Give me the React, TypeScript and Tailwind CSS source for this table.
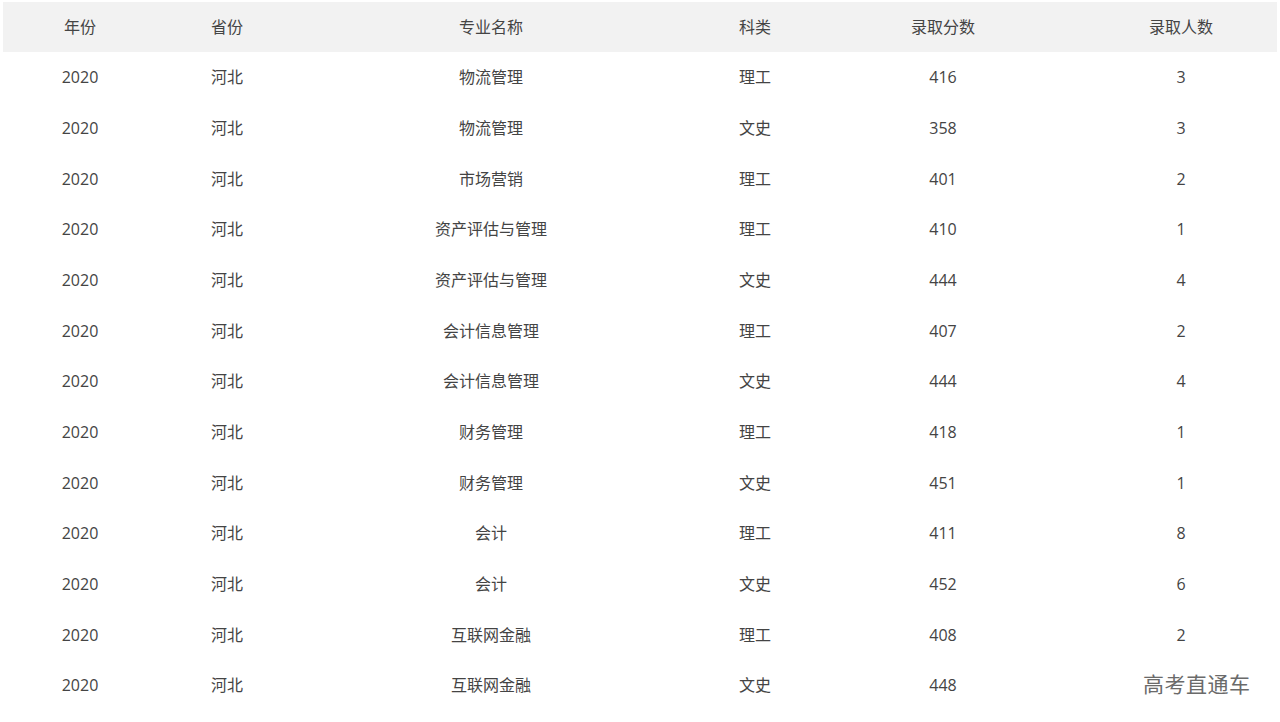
import React from "react";

const rows: [string, string, string, string, string, string][] = [
  ["2020", "河北", "物流管理", "理工", "416", "3"],
  ["2020", "河北", "物流管理", "文史", "358", "3"],
  ["2020", "河北", "市场营销", "理工", "401", "2"],
  ["2020", "河北", "资产评估与管理", "理工", "410", "1"],
  ["2020", "河北", "资产评估与管理", "文史", "444", "4"],
  ["2020", "河北", "会计信息管理", "理工", "407", "2"],
  ["2020", "河北", "会计信息管理", "文史", "444", "4"],
  ["2020", "河北", "财务管理", "理工", "418", "1"],
  ["2020", "河北", "财务管理", "文史", "451", "1"],
  ["2020", "河北", "会计", "理工", "411", "8"],
  ["2020", "河北", "会计", "文史", "452", "6"],
  ["2020", "河北", "互联网金融", "理工", "408", "2"],
  ["2020", "河北", "互联网金融", "文史", "448", ""],
];

const headers = ["年份", "省份", "专业名称", "科类", "录取分数", "录取人数"];

const grid = "grid grid-cols-[154px_140px_388px_140px_236px_216px]";

export default function App() {
  return (
    <div
      className="relative w-[1280px] h-[722px] bg-white overflow-hidden text-[16px] text-[#444]"
      style={{ fontFamily: '"Open Sans", "Noto Sans CJK SC", sans-serif' }}
    >
      <div className="pt-[2px] pl-[3px]">
        <div className={`${grid} h-[50px] bg-[#f2f2f2] items-center w-[1274px]`}>
          {headers.map((h, i) => (
            <div key={i} className={`text-center ${i === 5 ? "pl-[24px]" : ""}`}>
              {h}
            </div>
          ))}
        </div>
        {rows.map((r, ri) => (
          <div key={ri} className={`${grid} h-[50.67px] items-center w-[1274px]`}>
            {r.map((c, i) => (
              <div key={i} className={`text-center ${i === 5 ? "pl-[24px]" : ""}`}>
                {c}
              </div>
            ))}
          </div>
        ))}
      </div>
      <div
        className="absolute left-[1136px] top-[668px] px-[7px] bg-white text-[21px] leading-[30px] text-[#6a6a6a] tracking-[0.5px]"
        style={{ fontFamily: '"Noto Sans CJK SC", sans-serif' }}
      >
        高考直通车
      </div>
    </div>
  );
}
